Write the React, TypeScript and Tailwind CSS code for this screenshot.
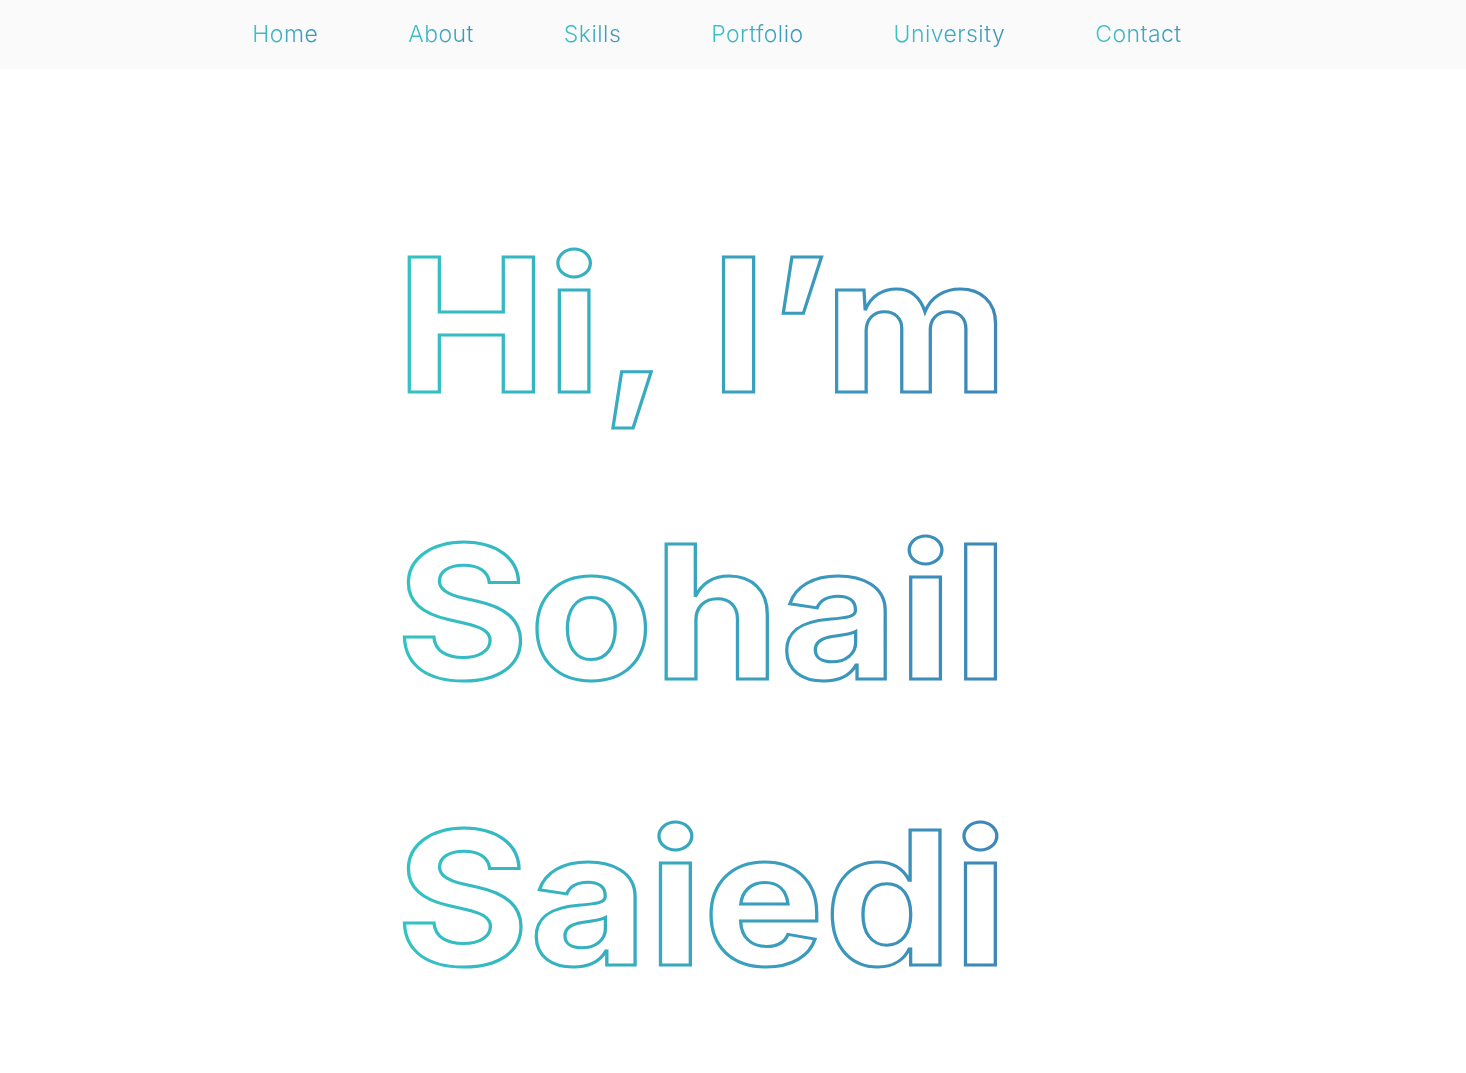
import React from "react";

const links = ["Home", "About", "Skills", "Portfolio", "University", "Contact"];

export default function App() {
  return (
    <div className="min-h-[1073px] bg-white" style={{ fontFamily: "Inter, 'Noto Sans', sans-serif" }}>
      <nav className="h-[69px] bg-[#fafafa] flex items-center justify-center pr-[32px]">
        <ul className="flex items-center gap-[90px]">
          {links.map((l) => (
            <li key={l}>
              <a className="text-[23px] font-light tracking-[0.45px] bg-gradient-to-r from-[#3cc2c6] to-[#3d93b9] bg-clip-text text-transparent">
                {l}
              </a>
            </li>
          ))}
        </ul>
      </nav>
      <div className="pl-[370px] pt-[111px]">
        <svg width="900" height="880" className="block overflow-visible" style={{ fontFamily: "Inter, sans-serif", fontWeight: 700 }}>
          <defs>
            <linearGradient id="g" x1="0" x2="1" y1="0" y2="0">
              <stop offset="0" stopColor="#33c3c3" />
              <stop offset="1" stopColor="#3e86b9" />
            </linearGradient>
          </defs>
          {[
            { t: "Hi, I\u2019m", y: 212 },
            { t: "Sohail", y: 499 },
            { t: "Saiedi", y: 785 },
          ].map((r) => (
            <text
              key={r.t}
              x="26"
              y={r.y}
              fontSize="186"
              textLength="612"
              lengthAdjust="spacingAndGlyphs"
              fill="#ffffff"
              stroke="url(#g)"
              strokeWidth="3"
            >
              {r.t}
            </text>
          ))}
        </svg>
      </div>
    </div>
  );
}
